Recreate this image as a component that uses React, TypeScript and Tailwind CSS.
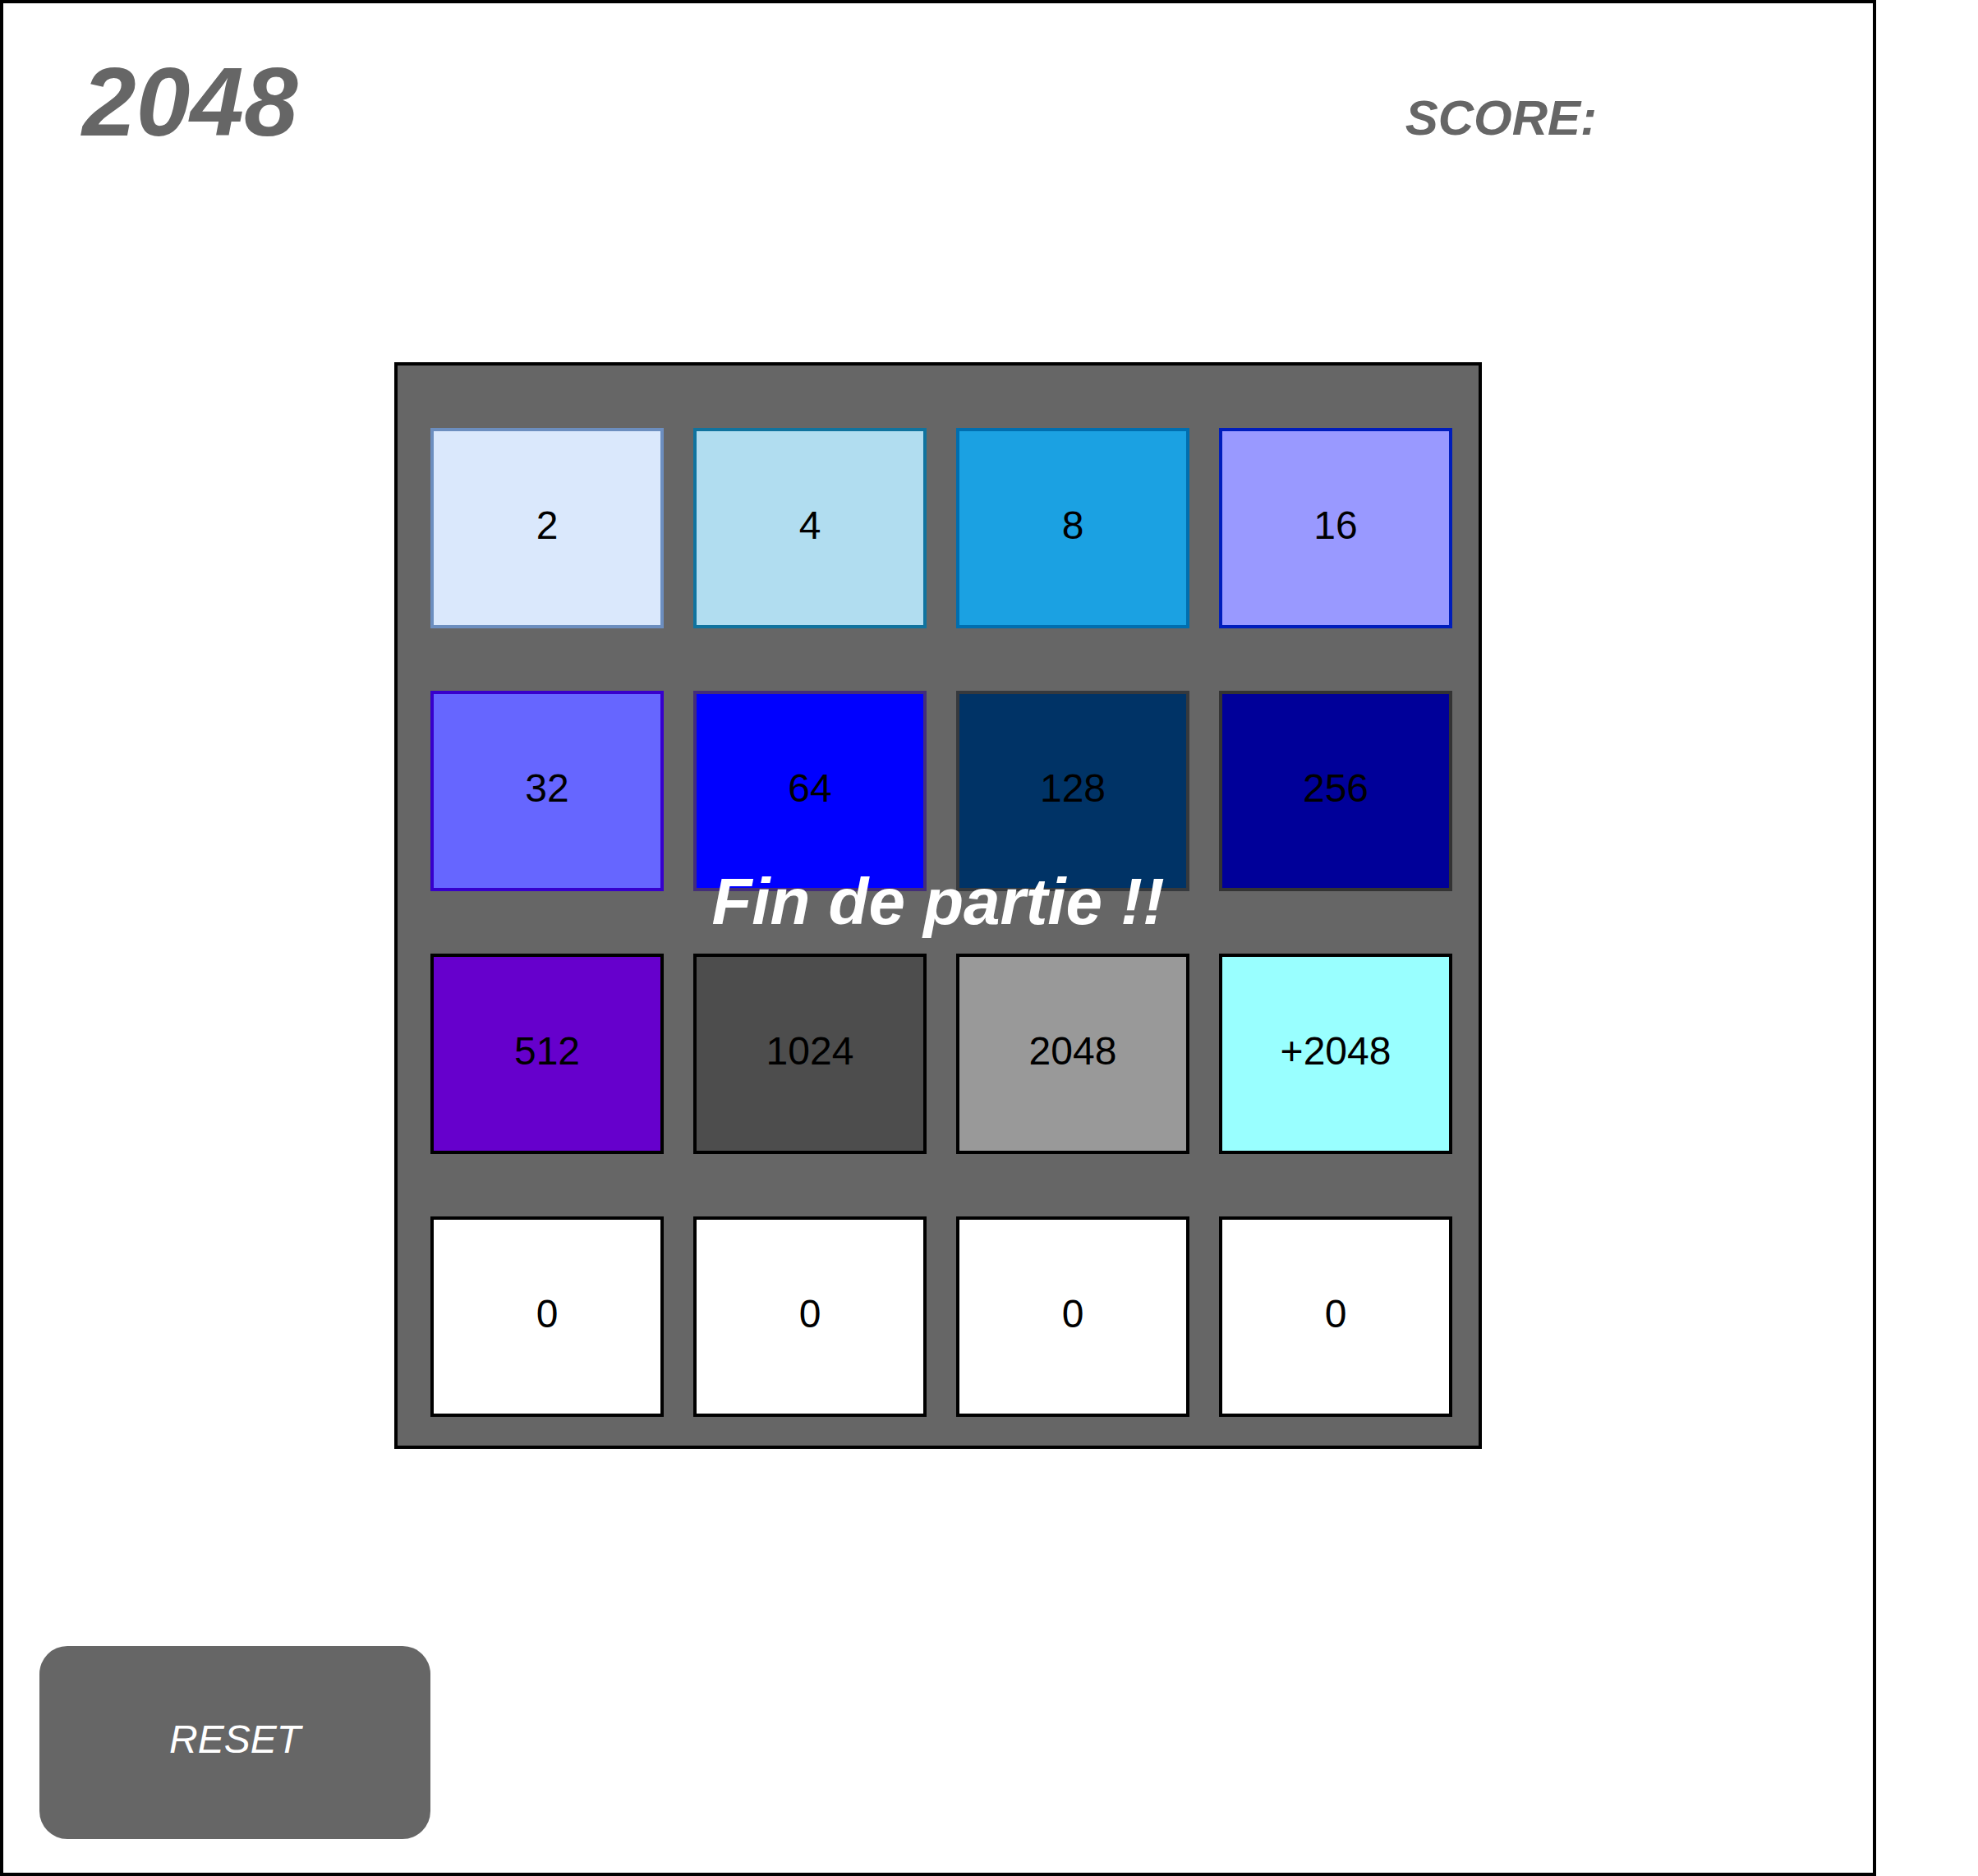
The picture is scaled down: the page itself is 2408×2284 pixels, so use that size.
import React from 'react'

type Tile = {
  value: string
  bg: string
}

const rows: Tile[][] = [
  [
    { value: '2', bg: 'bg-[#dae8fc] border-[#6c8ebf]' },
    { value: '4', bg: 'bg-[#b1ddf0] border-[#10739e]' },
    { value: '8', bg: 'bg-[#1ba1e2] border-[#006eaf]' },
    { value: '16', bg: 'bg-[#9999ff] border-[#001dbc]' },
  ],
  [
    { value: '32', bg: 'bg-[#6666ff] border-[#3700cc]' },
    { value: '64', bg: 'bg-[#0000ff] border-[#432d7a]' },
    { value: '128', bg: 'bg-[#003366] border-[#36393d]' },
    { value: '256', bg: 'bg-[#000099] border-[#333333]' },
  ],
  [
    { value: '512', bg: 'bg-[#6600cc] border-black' },
    { value: '1024', bg: 'bg-[#4d4d4d] border-black' },
    { value: '2048', bg: 'bg-[#999999] border-black' },
    { value: '+2048', bg: 'bg-[#99ffff] border-black' },
  ],
  [
    { value: '0', bg: 'bg-white border-black' },
    { value: '0', bg: 'bg-white border-black' },
    { value: '0', bg: 'bg-white border-black' },
    { value: '0', bg: 'bg-white border-black' },
  ],
]

const App = () => {
  return (
    <div className="w-[2408px] h-[2284px] bg-white font-['Liberation_Sans',Arial,sans-serif]">
      <div className="w-[2284px] h-[2284px] border-4 border-black flex flex-col">
        {/* header */}
        <div className="flex items-start">
          <h1 className="ml-[96px] mt-[61px] text-[118px] leading-none font-bold italic text-[#666666]">
            2048
          </h1>
          <p className="ml-auto mr-[336px] mt-[110px] text-[60px] leading-none font-bold italic text-[#666666]">
            SCORE:
          </p>
        </div>

        {/* board */}
        <div className="relative mx-auto mt-[258px] w-[1324px] border-4 border-black bg-[#666666] pt-[76px] pl-[40px] pr-[32px] pb-[35px]">
          <div className="grid grid-cols-[repeat(4,284px)] gap-x-[36px] gap-y-[76px]">
            {rows.flat().map((tile, i) => (
              <div
                key={i}
                className={`h-[244px] border-4 flex items-center justify-center pb-[6px] text-[48px] text-black ${tile.bg}`}
              >
                {tile.value}
              </div>
            ))}
          </div>
          <div className="absolute inset-0 flex items-center justify-center pb-[10px]">
            <span className="text-[80px] leading-none font-bold italic text-white">
              Fin de partie !!
            </span>
          </div>
        </div>

        {/* reset */}
        <button className="mt-auto mb-[41px] ml-[44px] w-[476px] h-[235px] rounded-[34px] bg-[#666666] text-white italic text-[48px] flex items-center justify-center pb-[8px]">
          RESET
        </button>
      </div>
    </div>
  )
}

export default App
